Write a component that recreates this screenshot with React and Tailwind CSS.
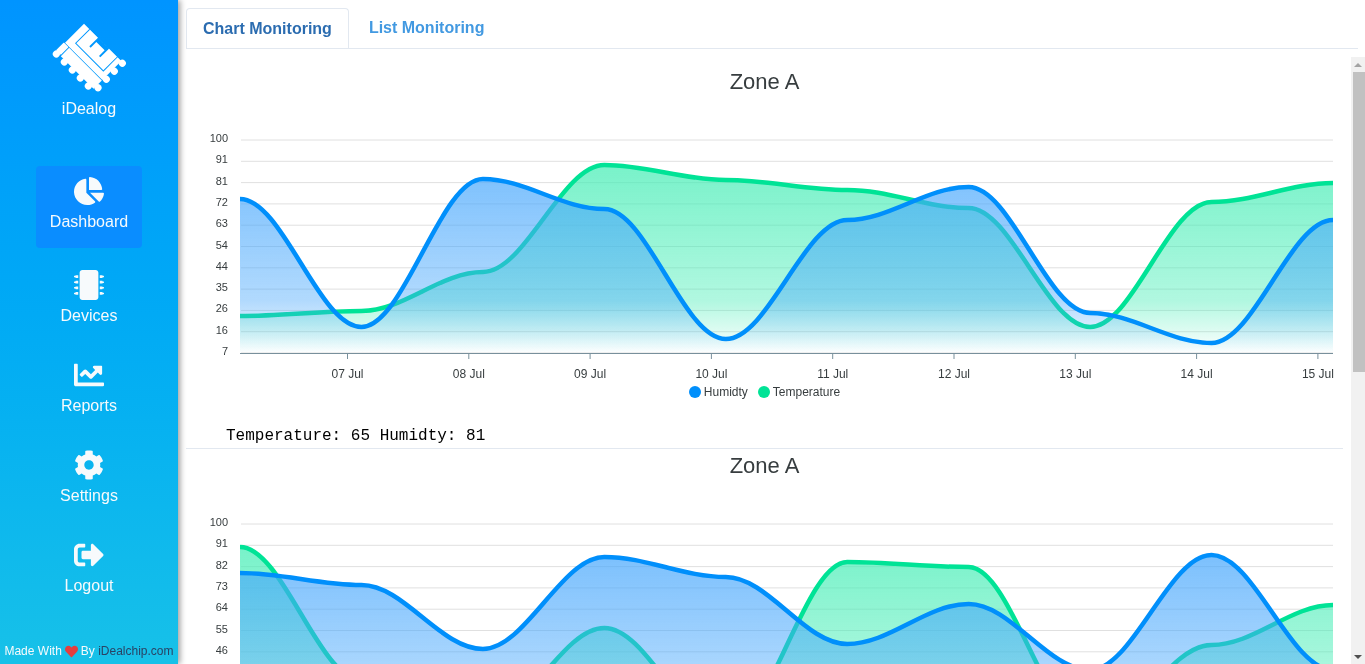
import { FaChartPie, FaMicrochip, FaChartLine, FaCog, FaSignOutAlt, FaHeart } from 'react-icons/fa';

const navItems = [
  { label: 'Dashboard', Icon: FaChartPie, active: true },
  { label: 'Devices', Icon: FaMicrochip },
  { label: 'Reports', Icon: FaChartLine },
  { label: 'Settings', Icon: FaCog },
  { label: 'Logout', Icon: FaSignOutAlt },
];

const dates = ['07 Jul', '08 Jul', '09 Jul', '10 Jul', '11 Jul', '12 Jul', '13 Jul', '14 Jul', '15 Jul'];

// series values are pixel offsets from the top of the plot
const charts = [
  {
    id: 'a',
    ticks: [100, 91, 81, 72, 63, 54, 44, 35, 26, 16, 7],
    humidity: [59, 187, 39, 69, 199, 80, 47, 173, 203, 80],
    temperature: [176, 171, 132, 25, 40, 50, 68, 187, 62, 43],
    note: 'Temperature: 65 Humidty: 81',
  },
  {
    id: 'b',
    ticks: [100, 91, 82, 73, 64, 55, 46, 37, 28, 19, 10],
    humidity: [49, 61, 125, 33, 53, 120, 80, 146, 31, 146],
    temperature: [23, 156, 196, 104, 206, 38, 43, 206, 121, 81],
    note: 'Temperature: 72 Humidty: 64',
  },
];

const PLOT_LEFT = 54;
const PLOT_RIGHT = 1147;
const PLOT_TOP = 41;
const PLOT_H = 213;

function smoothPath(values) {
  const step = (PLOT_RIGHT - PLOT_LEFT) / (values.length - 1);
  let d = `M ${PLOT_LEFT} ${PLOT_TOP + values[0]}`;
  for (let i = 1; i < values.length; i++) {
    const x0 = PLOT_LEFT + step * (i - 1);
    const x1 = PLOT_LEFT + step * i;
    const len = step * 0.35;
    d += ` C ${x0 + len} ${PLOT_TOP + values[i - 1]} ${x1 - len} ${PLOT_TOP + values[i]} ${x1} ${PLOT_TOP + values[i]}`;
  }
  return d;
}

function areaPath(values) {
  const bottom = PLOT_TOP + PLOT_H;
  return `${smoothPath(values)} L ${PLOT_RIGHT} ${bottom} L ${PLOT_LEFT} ${bottom} Z`;
}

function Logo() {
  const swPads = [4, 28, 52, 76, 100];
  const sePads = [2, 26, 50, 75];
  return (
    <svg viewBox="0 0 246 228" className="h-[76px] w-[82px]" fill="#fff">
      <g transform="translate(108 11) rotate(45) scale(1.414)">
        <path
          fillRule="evenodd"
          d="M0 0H112V57H0Z M16 0H18V41H99V0H101V43H16Z M42 0H75V26H71V9H46V26H42Z"
        />
        <rect x="14" y="58.5" width="98" height="25" />
        <rect x="-2" y="58.5" width="14" height="23" rx="1" />
        {swPads.map((u) => (
          <circle key={u} cx={u} cy={87} r="7.5" />
        ))}
        {sePads.map((v) => (
          <circle key={v} cx={117} cy={v} r="7.5" />
        ))}
      </g>
    </svg>
  );
}

function Sidebar() {
  return (
    <aside className="relative z-10 flex h-full w-[178px] shrink-0 flex-col items-center bg-gradient-to-b from-[#0094ff] to-[#17c1e8] text-[#f7fafc] shadow-[2px_0_6px_rgba(0,0,0,0.4)] will-change-transform">
      <div className="mt-[20px] flex flex-col items-center">
        <Logo />
        <p className="mt-[1px] text-base leading-6">iDealog</p>
      </div>
      <nav className="mt-[45px] flex flex-col items-center">
        {navItems.map(({ label, Icon, active }) => (
          <a
            key={label}
            className={
              active
                ? 'mb-[12px] flex h-[82px] w-[106px] flex-col items-center rounded-sm bg-[#0a8dff] pt-[10px]'
                : 'mb-[8px] flex h-[82px] w-[106px] flex-col items-center pt-[10px]'
            }
          >
            <Icon className="h-[30px] w-auto shrink-0" />
            <span className="mt-[4px] text-base leading-6">{label}</span>
          </a>
        ))}
      </nav>
      <p className="absolute bottom-[5px] left-0 flex w-full items-center justify-center whitespace-nowrap text-xs leading-4">
        Made With <FaHeart className="mx-[3px] h-[13px] w-[13px] text-[#e53e3e]" /> By&nbsp;
        <span className="text-[#2a4365]">iDealchip.com</span>
      </p>
    </aside>
  );
}

function Tabs() {
  return (
    <ul className="mr-[7px] flex h-[41px] border-b border-[#e2e8f0] text-base font-bold will-change-transform">
      <li className="-mb-px mr-1">
        <a className="block rounded-t border-x border-t border-[#e2e8f0] px-4 py-2 leading-6 text-[#2b6cb0]">
          Chart Monitoring
        </a>
      </li>
      <li className="mr-1">
        <a className="block px-4 py-2 leading-6 text-[#4299e1]">List Monitoring</a>
      </li>
    </ul>
  );
}

function ZoneChart({ chart }) {
  const { id, ticks, humidity, temperature, note } = chart;
  const bottom = PLOT_TOP + PLOT_H;
  const tickStep = 121.3;
  return (
    <section className="border-b border-[#e2e8f0]">
      <h2 className="h-[34px] text-center text-[22px] leading-[34px] text-[#373d3f]">Zone A</h2>
      <svg width="1157" height="283" className="block" fontFamily='"Liberation Sans", Arial, sans-serif'>
        <defs>
          <linearGradient id={`humidity-${id}`} gradientUnits="userSpaceOnUse" x1="0" y1={PLOT_TOP + 25} x2="0" y2={bottom}>
            <stop offset="0" stopColor="#45a6fc" stopOpacity="0.72" />
            <stop offset="0.72" stopColor="#45a6fc" stopOpacity="0.42" />
            <stop offset="1" stopColor="#45a6fc" stopOpacity="0" />
          </linearGradient>
          <linearGradient id={`temperature-${id}`} gradientUnits="userSpaceOnUse" x1="0" y1={PLOT_TOP + 25} x2="0" y2={bottom}>
            <stop offset="0" stopColor="#44edb5" stopOpacity="0.72" />
            <stop offset="0.72" stopColor="#44edb5" stopOpacity="0.42" />
            <stop offset="1" stopColor="#44edb5" stopOpacity="0" />
          </linearGradient>
        </defs>
        {ticks.map((tick, i) => {
          const y = PLOT_TOP + (PLOT_H / 10) * i;
          return (
            <g key={i}>
              <line x1="55" x2={PLOT_RIGHT} y1={y} y2={y} stroke="#e0e0e0" />
              <text x="42" y={y + 2} textAnchor="end" fontSize="11" fill="#373d3f">
                {tick}
              </text>
            </g>
          );
        })}
        <path d={areaPath(temperature)} fill={`url(#temperature-${id})`} />
        <path d={smoothPath(temperature)} fill="none" stroke="#00e396" strokeWidth="4.5" />
        <path d={areaPath(humidity)} fill={`url(#humidity-${id})`} />
        <path d={smoothPath(humidity)} fill="none" stroke="#008ffb" strokeWidth="4.5" />
        <line x1="54" x2={PLOT_RIGHT} y1={bottom + 0.5} y2={bottom + 0.5} stroke="#78909c" />
        {dates.map((date, i) => {
          const x = 161.5 + tickStep * i;
          return (
            <g key={date}>
              <line x1={x} x2={x} y1={bottom} y2={bottom + 6} stroke="#78909c" />
              <text x={x} y={bottom + 25} textAnchor="middle" fontSize="12" fill="#373d3f">
                {date}
              </text>
            </g>
          );
        })}
      </svg>
      <div className="flex h-5 items-center justify-center text-xs text-[#373d3f]">
        <span className="mr-[3px] h-3 w-3 rounded-full bg-[#008ffb]" />
        <span className="mr-[10px]">Humidty</span>
        <span className="mr-[3px] h-3 w-3 rounded-full bg-[#00e396]" />
        <span>Temperature</span>
      </div>
      <pre className="mt-[22px] h-6 pl-10 font-['Liberation_Mono',monospace] text-base leading-6 text-black">{note}</pre>
    </section>
  );
}

function Scrollbar() {
  return (
    <div className="flex w-[14px] shrink-0 flex-col bg-[#f1f1f1] pl-[2px]">
      <div className="flex h-[15px] items-center justify-center pr-[2px]">
        <span className="h-0 w-0 border-x-[4px] border-b-[4px] border-x-transparent border-b-[#a3a3a3]" />
      </div>
      <div className="h-[300px] bg-[#c1c1c1]" />
      <div className="mt-auto flex h-[15px] items-center justify-center pr-[2px]">
        <span className="h-0 w-0 border-x-[4px] border-t-[4px] border-x-transparent border-t-[#505050]" />
      </div>
    </div>
  );
}

export default function App() {
  return (
    <div className="flex h-screen overflow-hidden bg-white font-['Liberation_Sans',Arial,sans-serif]">
      <Sidebar />
      <main className="flex min-w-0 flex-1 flex-col pl-2 pt-2">
        <Tabs />
        <div className="mt-2 flex min-h-0 flex-1">
          <div className="min-w-0 flex-1 overflow-hidden pr-2 pt-2 will-change-transform">
            {charts.map((chart) => (
              <ZoneChart key={chart.id} chart={chart} />
            ))}
          </div>
          <Scrollbar />
        </div>
      </main>
    </div>
  );
}
